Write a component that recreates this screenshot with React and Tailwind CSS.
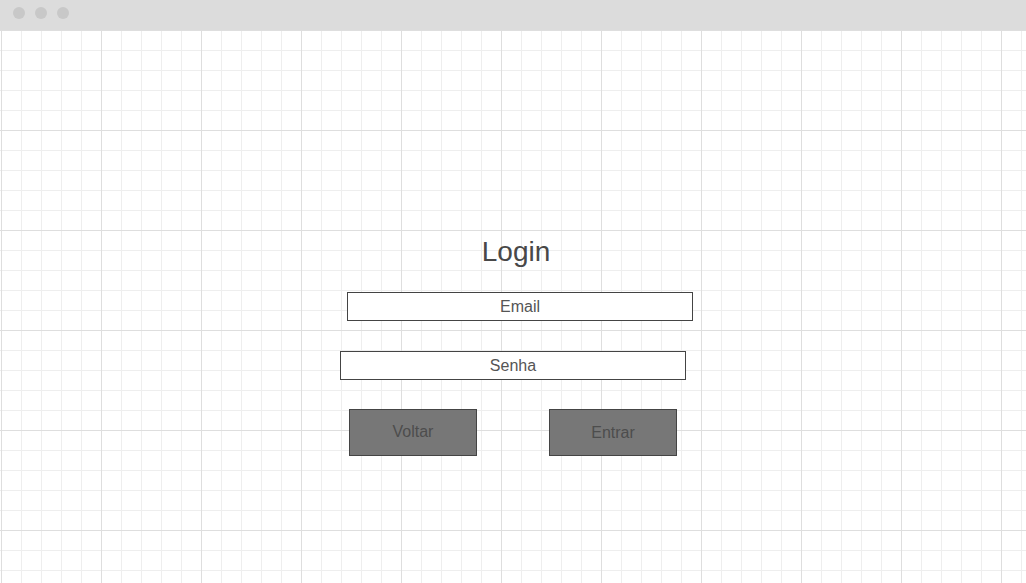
export default function App() {
  const font = { fontFamily: '"Liberation Sans", Arial, sans-serif' };

  return (
    <div className="w-[1026px] h-[583px] flex flex-col bg-white overflow-hidden" style={font}>
      {/* window chrome */}
      <div className="h-[30px] shrink-0 bg-[#dcdcdc] flex items-center gap-[10px] pl-[13px] pb-[4px]">
        <span className="w-[12px] h-[12px] rounded-full bg-[#c8c8c8]" />
        <span className="w-[12px] h-[12px] rounded-full bg-[#c8c8c8]" />
        <span className="w-[12px] h-[12px] rounded-full bg-[#c8c8c8]" />
      </div>

      {/* grid canvas */}
      <div className="flex-1 flex flex-col items-start bg-white bg-[image:linear-gradient(to_right,#dedede_1px,transparent_1px),linear-gradient(to_bottom,#dedede_1px,transparent_1px),linear-gradient(to_right,#eeeeee_1px,transparent_1px),linear-gradient(to_bottom,#eeeeee_1px,transparent_1px)] bg-[size:100px_100px,100px_100px,20px_20px,20px_20px] bg-[position:1px_0,1px_0,1px_0,1px_0]">
        <p className="mt-[206px] ml-[343px] w-[346px] text-center text-[28px] leading-[32px] text-[#484848]">Login</p>

        <div className="mt-[24px] ml-[347px] w-[346px] h-[29px] border border-[#444444] bg-white flex items-center justify-center text-[16px] text-[#555555]">
          Email
        </div>

        <div className="mt-[30px] ml-[340px] w-[346px] h-[29px] border border-[#444444] bg-white flex items-center justify-center text-[16px] text-[#555555]">
          Senha
        </div>

        <div className="mt-[29px] ml-[349px] flex gap-[72px]">
          <button className="w-[128px] h-[47px] border border-[#444444] bg-[#777777] flex items-center justify-center pb-[1px] text-[16px] text-[#4d4d4d]">
            Voltar
          </button>
          <button className="w-[128px] h-[47px] border border-[#444444] bg-[#777777] flex items-center justify-center pt-[1px] text-[16px] text-[#4d4d4d]">
            Entrar
          </button>
        </div>
      </div>
    </div>
  );
}
